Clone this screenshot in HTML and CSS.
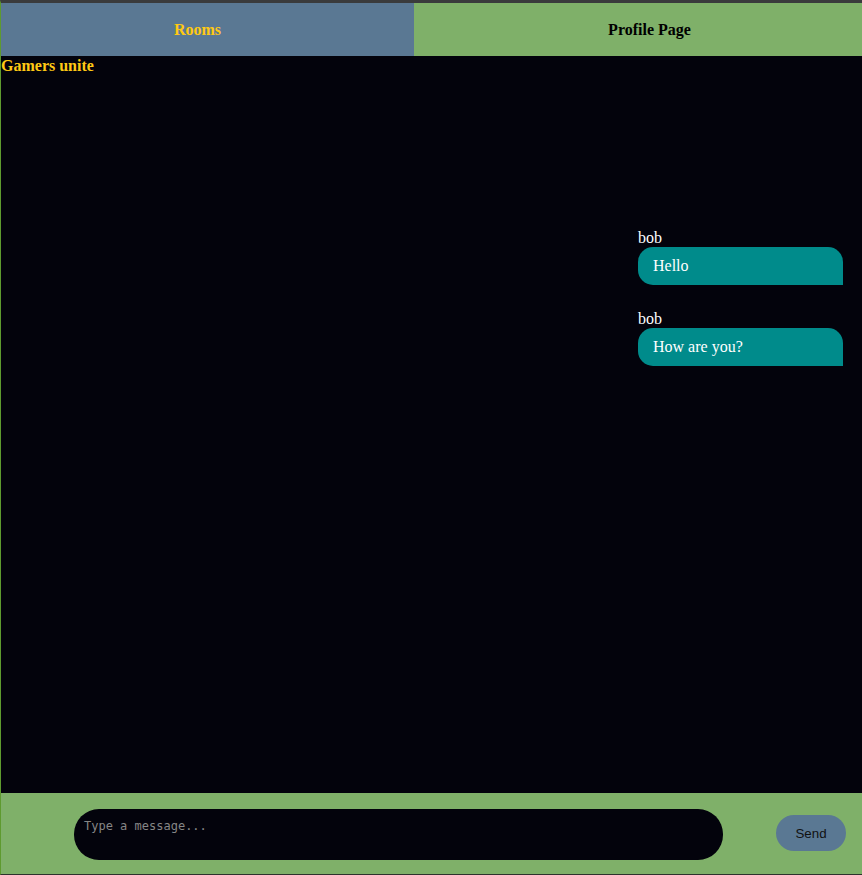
FILE: index.html
```html
<!DOCTYPE html>
<html>
<head>
<meta charset="utf-8">
<link rel="stylesheet" href="styles.css">
</head>
<body>
<div class="app">
  <nav class="nav">
    <div class="tab tab-rooms">Rooms</div>
    <div class="tab tab-profile">Profile Page</div>
  </nav>
  <main class="chat">
    <h2 class="room-title">Gamers unite</h2>
    <div class="messages">
      <div class="msg">
        <div class="author">bob</div>
        <div class="bubble">Hello</div>
      </div>
      <div class="msg">
        <div class="author">bob</div>
        <div class="bubble">How are you?</div>
      </div>
    </div>
  </main>
  <footer class="composer">
    <textarea class="input" placeholder="Type a message..."></textarea>
    <button class="send">Send</button>
  </footer>
</div>
</body>
</html>
```
FILE: styles.css
```css
html, body {
  margin: 0;
  padding: 0;
  height: 100%;
  background: #03030c;
}
.app {
  box-sizing: border-box;
  height: 875px;
  display: flex;
  flex-direction: column;
  border-top: 3px solid #3a3b3c;
  border-left: 1px solid #5e9a2f;
  border-bottom: 1px solid #2c332c;
  font-family: "Liberation Serif", "Times New Roman", serif;
}
.nav {
  display: flex;
  height: 53px;
  flex: none;
}
.tab {
  display: flex;
  align-items: center;
  justify-content: center;
  font-weight: bold;
  font-size: 16px;
}
.tab-rooms {
  width: 413px;
  background: #5a7893;
  color: #ffc914;
  padding-right: 20px;
  box-sizing: border-box;
}
.tab-profile {
  flex: 1;
  background: #7fb069;
  color: #000;
  padding-left: 23px;
}
.chat {
  flex: 1;
  background: #03030c;
  display: flex;
  flex-direction: column;
}
.room-title {
  margin: 0;
  font-size: 16px;
  line-height: 19px;
  color: #ffc914;
}
.messages {
  display: flex;
  flex-direction: column;
  align-items: flex-end;
  padding: 154px 19px 0 0;
  gap: 25px;
}
.msg {
  width: 205px;
}
.author {
  color: #fff;
  font-size: 16px;
  line-height: 18px;
}
.bubble {
  background: #008b8b;
  color: #fff;
  font-size: 16px;
  line-height: 18px;
  padding: 10px 15px;
  border-radius: 15px 15px 0 15px;
}
.composer {
  box-sizing: border-box;
  flex: none;
  height: 81px;
  background: #7fb069;
  display: flex;
  align-items: center;
  padding: 1px 15px 0 73px;
  gap: 53px;
}
.input {
  box-sizing: border-box;
  width: 649px;
  height: 51px;
  border: none;
  outline: none;
  resize: none;
  background: #03030c;
  color: #fff;
  caret-color: #ffc914;
  border-radius: 25px;
  padding: 10px 10px;
  font-family: "DejaVu Sans Mono", monospace;
  font-size: 12px;
}
.input::placeholder {
  color: #868686;
}
.send {
  width: 70px;
  height: 36px;
  margin-bottom: 2px;
  border: none;
  border-radius: 18px;
  background: #5a7893;
  color: #111;
  font-family: "Liberation Sans", Arial, sans-serif;
  font-size: 13.333px;
  padding: 0;
}
```
